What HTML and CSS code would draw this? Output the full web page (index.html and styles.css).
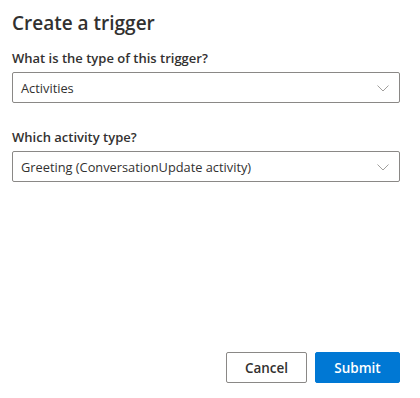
FILE: index.html
```html
<!DOCTYPE html>
<html>
<head>
<meta charset="utf-8">
<link rel="stylesheet" href="styles.css">
</head>
<body>
<div class="dialog">
  <h1 class="title">Create a trigger</h1>
  <div class="field">
    <label class="label">What is the type of this trigger?</label>
    <div class="dropdown">
      <span class="value">Activities</span>
      <svg class="chev" width="12" height="12" viewBox="0 0 12 12"><path d="M0.5 3.5 L6 9 L11.5 3.5" fill="none" stroke="#a19f9d" stroke-width="1"/></svg>
    </div>
  </div>
  <div class="field second">
    <label class="label">Which activity type?</label>
    <div class="dropdown">
      <span class="value">Greeting (ConversationUpdate activity)</span>
      <svg class="chev" width="12" height="12" viewBox="0 0 12 12"><path d="M0.5 3.5 L6 9 L11.5 3.5" fill="none" stroke="#a19f9d" stroke-width="1"/></svg>
    </div>
  </div>
  <div class="spacer"></div>
  <div class="footer">
    <button class="btn default">Cancel</button>
    <button class="btn primary">Submit</button>
  </div>
</div>
</body>
</html>
```
FILE: styles.css
```css
html, body {
  margin: 0;
  padding: 0;
  background: #ffffff;
}
body {
  font-family: "Open Sans", "Noto Sans", sans-serif;
  color: #323130;
}
.dialog {
  width: 420px;
  height: 398px;
  box-sizing: border-box;
  padding: 10px 20px 15px 12px;
  display: flex;
  flex-direction: column;
}
.title {
  margin: 0;
  font-size: 19px;
  font-weight: 600;
  line-height: 26px;
  color: #323130;
}
.field {
  display: flex;
  flex-direction: column;
  margin-top: 12px;
}
.field.second {
  margin-top: 24px;
}
.label {
  font-size: 13px;
  font-weight: 600;
  line-height: 20px;
  padding-bottom: 4px;
  color: #323130;
}
.dropdown {
  border: 1px solid #8a8886;
  border-radius: 2px;
  display: flex;
  align-items: center;
  justify-content: space-between;
  padding: 0 8px 0 8px;
  box-sizing: border-box;
  height: 31px;
}
.value {
  font-size: 12.8px;
  color: #323130;
}
.chev {
  margin-right: 2px;
}
.spacer {
  flex: 1;
}
.footer {
  display: flex;
  justify-content: flex-end;
  gap: 8px;
}
.btn {
  height: 31px;
  border-radius: 2px;
  font-family: inherit;
  font-size: 13.5px;
  font-weight: 600;
  padding: 0 16px;
  cursor: pointer;
}
.btn.default {
  width: 81px;
  background: #ffffff;
  border: 1px solid #8a8886;
  color: #323130;
}
.btn.primary {
  width: 85px;
  background: #0078d4;
  border: 1px solid #0078d4;
  color: #ffffff;
}
```
